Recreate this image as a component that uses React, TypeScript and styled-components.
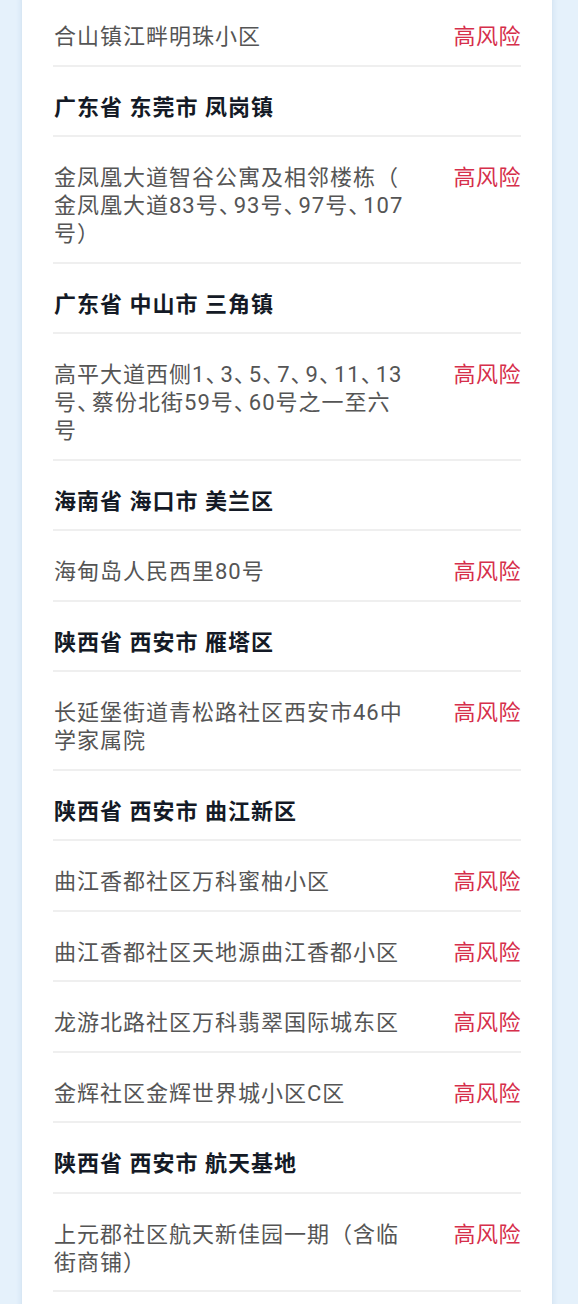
import React from 'react';
import styled, { createGlobalStyle } from 'styled-components';

const GlobalStyle = createGlobalStyle`
  html, body {
    margin: 0;
    padding: 0;
    background: #e5f1fb;
    overflow: hidden;
  }
  body {
    font-family: Roboto, "Noto Sans CJK SC", sans-serif;
  }
`;

type Entry =
  | { kind: 'region'; name: string }
  | { kind: 'place'; lines: string[] };

const entries: Entry[] = [
  { kind: 'place', lines: ['合山镇江畔明珠小区'] },
  { kind: 'region', name: '广东省 东莞市 凤岗镇' },
  { kind: 'place', lines: ['金凤凰大道智谷公寓及相邻楼栋（', '金凤凰大道83号、93号、97号、107', '号）'] },
  { kind: 'region', name: '广东省 中山市 三角镇' },
  { kind: 'place', lines: ['高平大道西侧1、3、5、7、9、11、13', '号、蔡份北街59号、60号之一至六', '号'] },
  { kind: 'region', name: '海南省 海口市 美兰区' },
  { kind: 'place', lines: ['海甸岛人民西里80号'] },
  { kind: 'region', name: '陕西省 西安市 雁塔区' },
  { kind: 'place', lines: ['长延堡街道青松路社区西安市46中', '学家属院'] },
  { kind: 'region', name: '陕西省 西安市 曲江新区' },
  { kind: 'place', lines: ['曲江香都社区万科蜜柚小区'] },
  { kind: 'place', lines: ['曲江香都社区天地源曲江香都小区'] },
  { kind: 'place', lines: ['龙游北路社区万科翡翠国际城东区'] },
  { kind: 'place', lines: ['金辉社区金辉世界城小区C区'] },
  { kind: 'region', name: '陕西省 西安市 航天基地' },
  { kind: 'place', lines: ['上元郡社区航天新佳园一期（含临', '街商铺）'] },
];

const Page = styled.main`
  margin: -4px 26px 0 22px;
`;

const Card = styled.section`
  background: #ffffff;
  padding: 0 31px 40px;
  box-shadow: 0 0 6px rgba(70, 120, 170, 0.18);
`;

const Row = styled.div`
  display: grid;
  grid-template-columns: minmax(0, 1fr) auto;
  column-gap: 12px;
  align-items: start;
  padding: 27px 0 13.5px 1px;
  border-bottom: 2px solid #efefef;
  font-size: 22px;
  line-height: 28px;
  letter-spacing: 1px;
`;

const Region = styled.div`
  color: #141a26;
  font-weight: 700;
`;

const Address = styled.div`
  color: #555555;
  white-space: pre;
`;

// the enumeration comma is set narrow in the original
const Comma = styled.span`
  letter-spacing: -7px;
`;

const Risk = styled.span`
  color: #d62f4b;
  letter-spacing: 0.5px;
  white-space: nowrap;
`;

function renderLine(line: string) {
  return line.split(/(、)/).map((part, j) =>
    part === '、' ? <Comma key={j}>、</Comma> : part
  );
}

export default function App() {
  return (
    <>
      <GlobalStyle />
      <Page>
        <Card>
          {entries.map((e, i) =>
            e.kind === 'region' ? (
              <Row key={i}>
                <Region>{e.name}</Region>
              </Row>
            ) : (
              <Row key={i}>
                <Address>
                  {e.lines.map((line, k) => (
                    <React.Fragment key={k}>
                      {k > 0 && '\n'}
                      {renderLine(line)}
                    </React.Fragment>
                  ))}
                </Address>
                <Risk>高风险</Risk>
              </Row>
            )
          )}
        </Card>
      </Page>
    </>
  );
}
